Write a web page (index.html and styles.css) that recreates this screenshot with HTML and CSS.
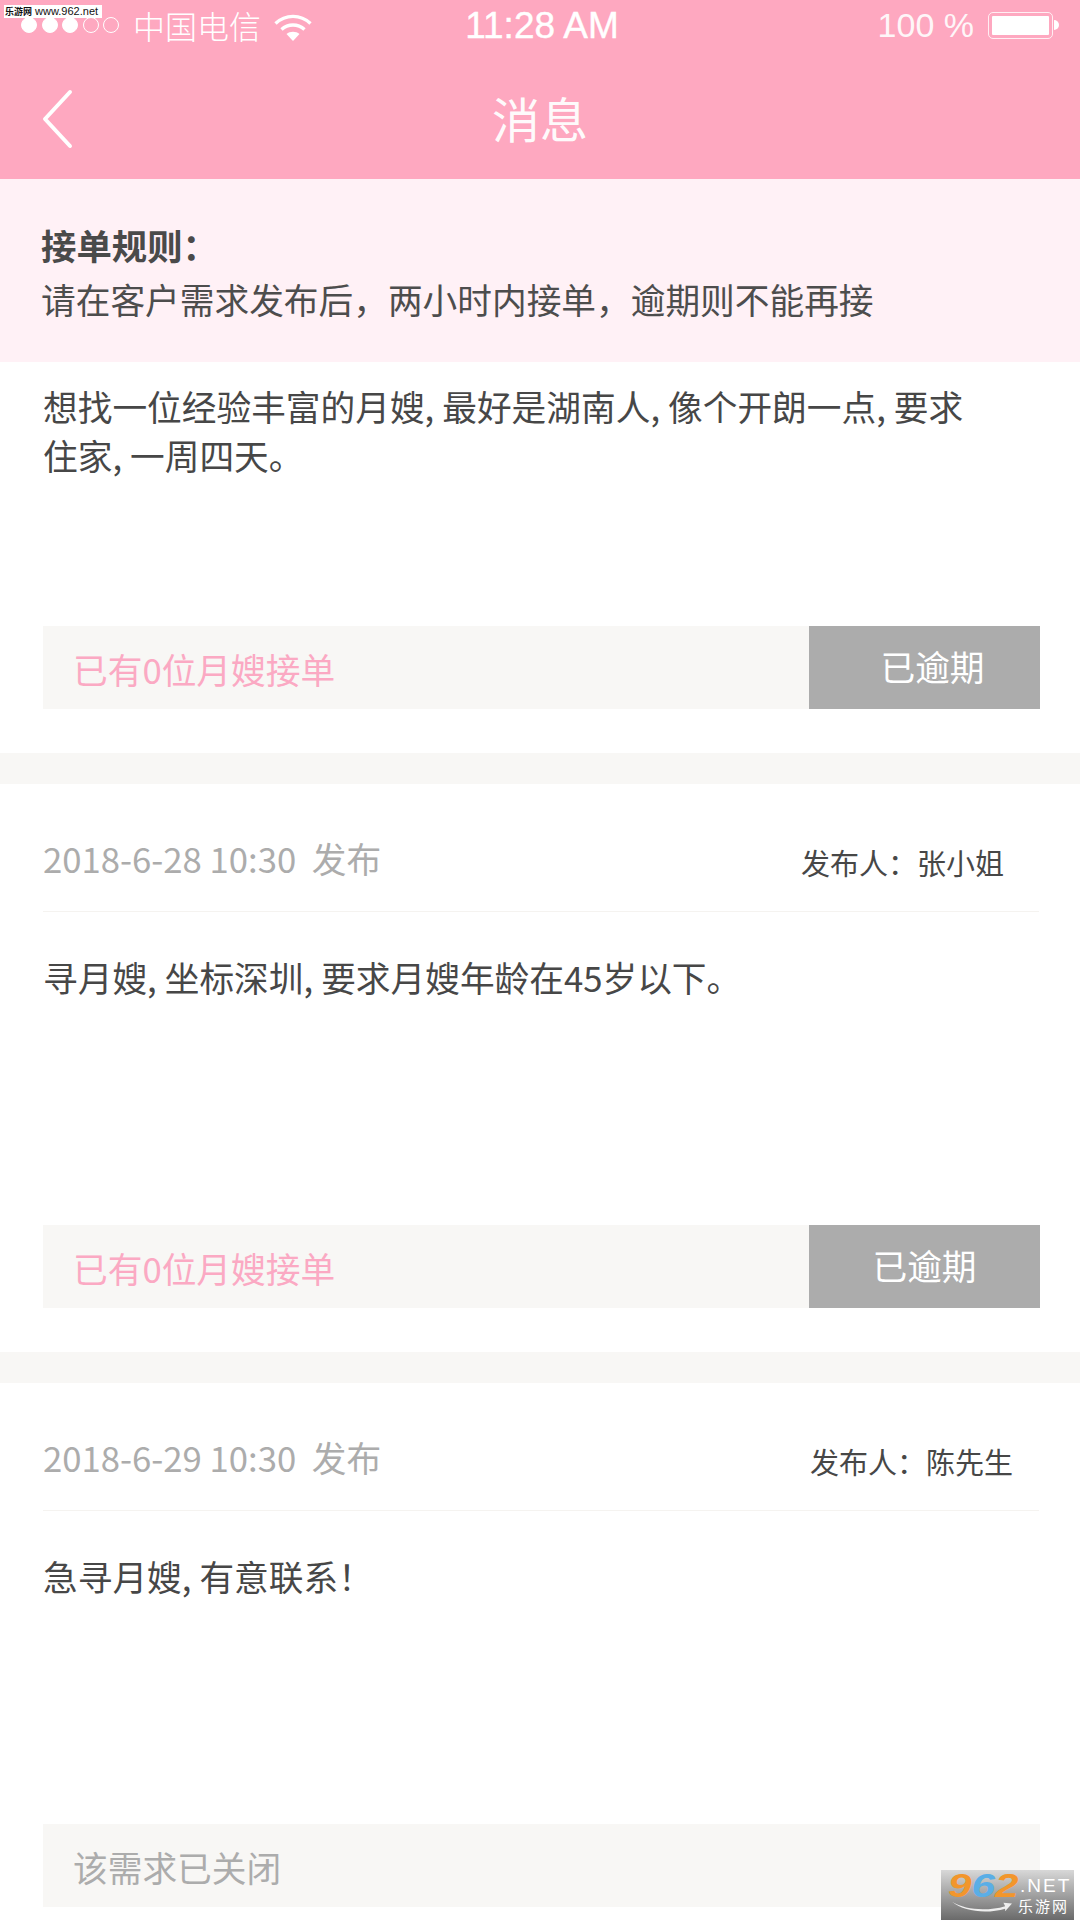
FILE: index.html
```html
<!DOCTYPE html>
<html lang="zh-CN">
<head>
    <meta charset="UTF-8">
    <meta name="viewport" content="width=device-width, initial-scale=1.0">
    <title>消息</title>
    <link rel="stylesheet" href="styles.css">
</head>
<body>
    <div class="page">
        <header class="top">
            <div class="status">
                <div class="status-left">
                    <span class="dots">
                        <i class="dot on"></i><i class="dot on"></i><i class="dot on"></i><i class="dot"></i><i class="dot"></i>
                    </span>
                    <span class="carrier">中国电信</span>
                    <svg class="wifi" width="38" height="27" viewBox="0 0 38 27">
                        <path d="M1.5 9.5C11.5 0 26.500 0 36.500 9.500" fill="none" stroke="#fff" stroke-width="3.400"/>
                        <path d="M7.500 15.500C14 9.500 24 9.500 30.500 15.500" fill="none" stroke="#fff" stroke-width="3.400"/>
                        <path d="M12.500 20 C16 17 22 17 25.500 20 L19 27Z" fill="#fff"/>
                    </svg>
                </div>
                <div class="time">11:28 AM</div>
                <div class="status-right">
                    <span class="percent">100 %</span>
                    <span class="battery"><span class="battery-fill"></span></span>
                    <span class="battery-nub"></span>
                </div>
            </div>
            <nav class="nav">
                <svg class="back" width="32" height="60" viewBox="0 0 32 60">
                    <path d="M28 3L3 30L28 57" fill="none" stroke="#fff" stroke-width="4" stroke-linecap="round" stroke-linejoin="round"/>
                </svg>
                <h1 class="title">消息</h1>
            </nav>
        </header>

        <section class="notice">
            <div class="notice-head">接单规则：</div>
            <div class="notice-text">请在客户需求发布后，两小时内接单，逾期则不能再接</div>
        </section>

        <section class="card card-first">
            <p class="content">想找一位经验丰富的月嫂<span class="comma">,</span>最好是湖南人<span class="comma">,</span>像个开朗一点<span class="comma">,</span>要求<br>住家<span class="comma">,</span>一周四天。</p>
            <div class="bar">
                <span class="bar-text">已有0位月嫂接单</span>
                <span class="bar-btn btn-shift">已逾期</span>
            </div>
        </section>

        <section class="card">
            <div class="card-head">
                <span class="date">2018-6-28 10:30&nbsp;&nbsp;发布</span>
                <span class="author">发布人：张小姐</span>
            </div>
            <p class="content">寻月嫂<span class="comma">,</span>坐标深圳<span class="comma">,</span>要求月嫂年龄在45岁以下。</p>
            <div class="bar">
                <span class="bar-text">已有0位月嫂接单</span>
                <span class="bar-btn">已逾期</span>
            </div>
        </section>

        <section class="card card-last">
            <div class="card-head">
                <span class="date">2018-6-29 10:30&nbsp;&nbsp;发布</span>
                <span class="author author-wide">发布人：陈先生</span>
            </div>
            <p class="content">急寻月嫂<span class="comma">,</span>有意联系！</p>
            <div class="bar">
                <span class="bar-text closed">该需求已关闭</span>
            </div>
        </section>
    </div>

    <div class="mark-top"><b>乐游网</b> www.962.net</div>
    <div class="mark-logo">
        <div class="logo-num"><span class="n9">9</span><span class="n6">6</span><span class="n2">2</span></div>
        <div class="logo-net">.NET</div>
        <div class="logo-cn">乐游网</div>
        <svg class="swoosh" width="68" height="12" viewBox="0 0 70 14">
            <path d="M0 1C16 11 42 12 62 6L60 2L70 3L62 12L62 9C42 15 14 13 0 1Z" fill="#eee"/>
        </svg>
    </div>
</body>
</html>
```

FILE: styles.css
```css
* {
    box-sizing: border-box;
}
body {
    margin: 0;
    padding: 0;
    width: 1080px;
    height: 1920px;
    overflow: hidden;
    position: relative;
    background: #fff;
    font-family: "Noto Sans CJK SC", "Noto Sans", sans-serif;
    font-weight: 400;
    color: #474747;
}
.page {
    display: flex;
    flex-direction: column;
    height: 1920px;
}

/* top pink area */
.top {
    height: 179px;
    background: #fea8c0;
    color: #fff;
    flex: none;
}
.status {
    height: 50px;
    padding: 0 21px;
    display: flex;
    align-items: center;
}
.status-left,
.status-right {
    flex: 1;
    display: flex;
    align-items: center;
}
.status-right {
    justify-content: flex-end;
}
.dots {
    display: flex;
    gap: 4.500px;
}
.dot {
    width: 16px;
    height: 16px;
    border-radius: 50%;
    border: 1px solid #fff;
}
.dot.on {
    background: #fff;
}
.carrier {
    font-size: 32px;
    font-weight: 300;
    line-height: 50px;
    margin-left: 14px;
}
.wifi {
    margin: 4px 0 0 13px;
}
.time {
    font-family: "Liberation Sans", Arial, sans-serif;
    font-size: 37px;
    padding: 2px 0 0 4px;
    -webkit-text-stroke: 0.4px #fff;
}
.percent {
    font-family: "Liberation Sans", Arial, sans-serif;
    font-size: 34px;
    opacity: 0.9;
    margin-right: 14px;
}
.battery {
    width: 65px;
    height: 27px;
    padding: 3px;
    border: 1px solid rgba(255, 255, 255, 0.8);
    border-radius: 5px;
    display: flex;
}
.battery-fill {
    flex: 1;
    background: #fff;
    border-radius: 1px;
}
.battery-nub {
    width: 5px;
    height: 10px;
    margin-left: 1px;
    background: #fff;
    border-radius: 0 5px 5px 0;
}
.nav {
    height: 129px;
    padding: 8px 0 0 42px;
    display: flex;
    align-items: center;
    position: relative;
}
.title {
    margin: 0;
    position: absolute;
    left: 0;
    right: 0;
    top: 27px;
    text-align: center;
    font-size: 48px;
    font-weight: 400;
    line-height: 80px;
    opacity: 0.95;
}

/* rules box */
.notice {
    height: 183px;
    flex: none;
    background: #fff1f6;
    padding: 38px 42px 0;
    line-height: 55px;
}
.notice-head {
    font-size: 35.400px;
    font-weight: 700;
    color: #4a4a4a;
    margin-left: -1px;
}
.notice-text {
    font-size: 34.700px;
    color: #4d4d4d;
    margin-left: -1px;
}

/* cards */
.card {
    flex: none;
    height: 599px;
    border-bottom: 31px solid #f8f7f5;
    padding: 0 40px 44px 43px;
    display: flex;
    flex-direction: column;
}
.card-first {
    height: 422px;
}
.card-last {
    flex: 1;
    border-bottom: 0;
    padding-bottom: 13px;
}
.card-head {
    height: 128px;
    flex: none;
    margin-right: 1px;
    padding-top: 23px;
    display: flex;
    justify-content: space-between;
    align-items: center;
    border-bottom: 1px solid #f5f3f0;
}
.date {
    color: #acacac;
    font-size: 34.700px;
    padding-bottom: 2px;
}
.author {
    font-size: 29px;
    padding: 6px 35px 0 0;
}
.author-wide {
    padding-right: 26px;
}
.content {
    margin: 0;
    flex: 1;
    font-size: 34.700px;
    line-height: 49px;
    padding-top: 41px;
}
.comma {
    padding-right: 8px;
}
.card-first .content {
    padding-top: 20px;
}
.bar {
    height: 83px;
    flex: none;
    display: flex;
    background: #f8f7f5;
}
.bar-text {
    flex: 1;
    padding: 3px 0 0 30px;
    font-size: 34.700px;
    line-height: 80px;
    color: #fba9c3;
}
.bar-text.closed {
    color: #acacac;
}
.bar-btn {
    width: 231px;
    background: #acacac;
    color: #fff;
    text-align: center;
    font-size: 34.700px;
    line-height: 81px;
}
.btn-shift {
    padding-left: 16px;
}

/* watermarks on top of the screenshot */
.mark-top {
    position: absolute;
    left: 4px;
    top: 5px;
    width: 98px;
    height: 13px;
    background: #fff;
    color: #111;
    font-family: "Liberation Sans", "Noto Sans CJK SC", sans-serif;
    font-size: 11px;
    line-height: 13px;
    white-space: nowrap;
    padding-left: 1px;
}
.mark-top b {
    font-family: "Noto Sans CJK SC", sans-serif;
    font-size: 9px;
    font-weight: 700;
}
.mark-logo {
    position: absolute;
    left: 941px;
    top: 1870px;
    width: 133px;
    height: 50px;
    background: linear-gradient(#d8d8d8, #6a6a6a);
}
.logo-num {
    position: absolute;
    left: 7px;
    top: 0;
    font-family: "Liberation Sans", sans-serif;
    font-size: 33px;
    font-weight: 700;
    font-style: italic;
    line-height: 32px;
    white-space: nowrap;
    transform: scaleX(1.28);
    transform-origin: left;
}
.n9, .n2 {
    color: #f2962c;
}
.n6 {
    color: #5aaee6;
}
.logo-net {
    position: absolute;
    left: 79px;
    top: 4px;
    color: #fff;
    font-family: "Liberation Sans", sans-serif;
    font-size: 19px;
    line-height: 24px;
    letter-spacing: 2px;
    white-space: nowrap;
}
.logo-cn {
    position: absolute;
    left: 77px;
    top: 27px;
    color: #fff;
    font-size: 15px;
    letter-spacing: 2px;
    line-height: 18px;
    white-space: nowrap;
}
.swoosh {
    position: absolute;
    left: 7px;
    top: 31px;
}
```
